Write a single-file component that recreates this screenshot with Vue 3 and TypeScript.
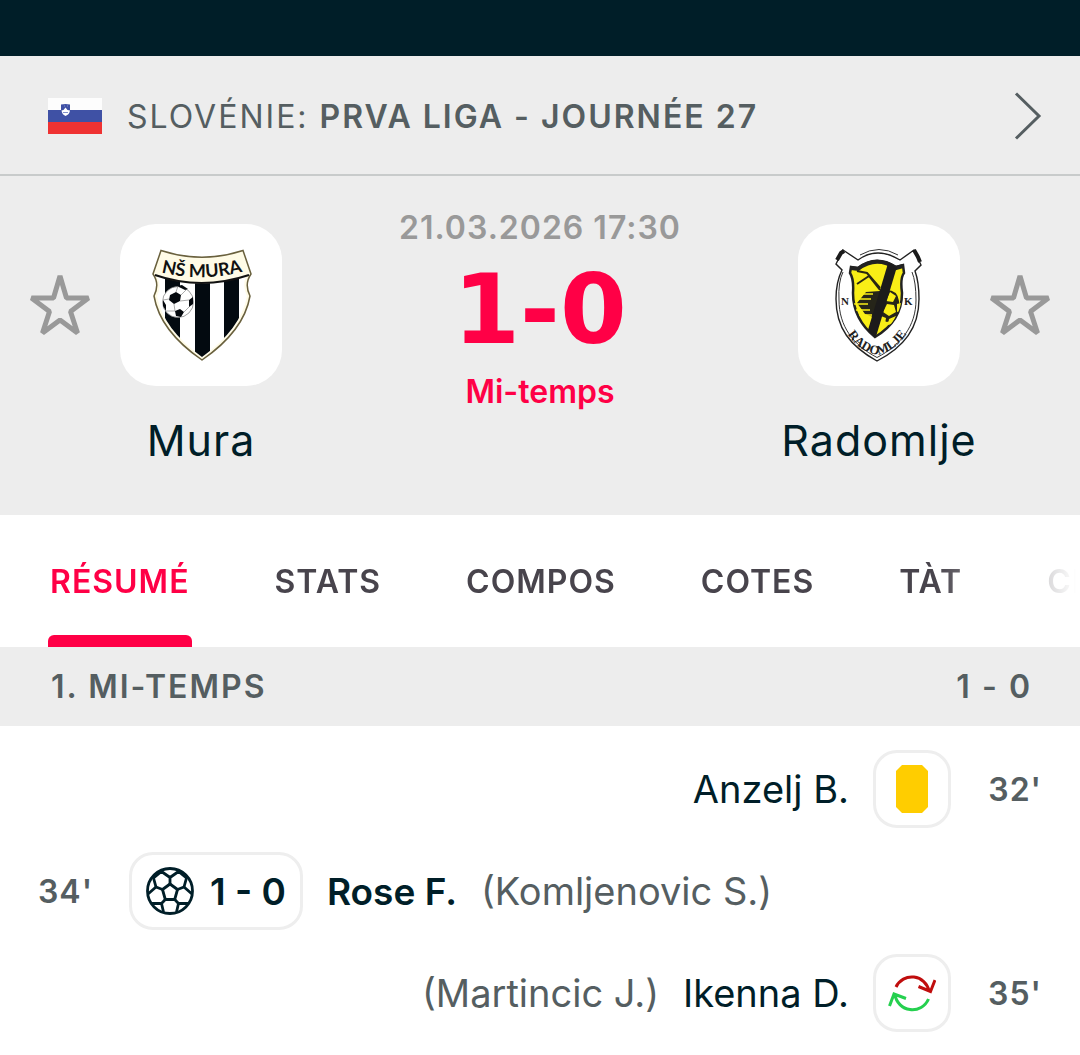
<script setup lang="ts">
import { ref } from 'vue'

interface MatchEvent {
  minute: string
  side: 'home' | 'away'
  kind: 'card' | 'goal' | 'sub'
  player: string
  other?: string
  score?: string
}

const tabs: string[] = ['RÉSUMÉ', 'STATS', 'COMPOS', 'COTES', 'TÀT', 'CLASSEMENT']
const active = ref('RÉSUMÉ')

const events: MatchEvent[] = [
  { minute: "32'", side: 'away', kind: 'card', player: 'Anzelj B.' },
  { minute: "34'", side: 'home', kind: 'goal', player: 'Rose F.', other: '(Komljenovic S.)', score: '1 - 0' },
  { minute: "35'", side: 'away', kind: 'sub', player: 'Ikenna D.', other: '(Martincic J.)' },
]
</script>

<template>
  <div class="page">
    <div class="topbar"></div>

    <a class="league" href="#">
      <svg class="flag" viewBox="0 0 54 36" aria-hidden="true">
        <rect width="54" height="12" fill="#fdfdfd" />
        <rect y="12" width="54" height="12" fill="#3f51a5" />
        <rect y="24" width="54" height="12" fill="#ef3232" />
        <path d="M13 6.500q4.500-1 9 0v6q0 4-4.500 5.500q-4.500-1.500-4.500-5.500z" fill="#3f51a5" />
        <path d="M13.500 12.500l2 -.5l2-2.500l2 2.500l2.500 .5q-.5 4-4.500 5.500q-3.500-1.500-4-5.500z" fill="#fff" />
        <path d="M15 14.500h5M16 8h1M19 8h1" stroke="#8190cb" stroke-width="1" />
      </svg>
      <span class="league-name">SLOVÉNIE: <strong>PRVA LIGA - JOURNÉE 27</strong></span>
      <svg class="chevron" viewBox="0 0 28 48" aria-hidden="true">
        <path d="M2 1.500L25 24L2 46.500" fill="none" stroke="#555e61" stroke-width="3" />
      </svg>
    </a>

    <header class="match">
      <button class="star" type="button" aria-label="Suivre Mura">
        <svg viewBox="0 0 60 60" aria-hidden="true">
          <path d="M30 1L36.500 23H58.500L40.500 36.500L47.500 58L30 45L12.500 58L19.500 36.500L1.500 23H23.500Z" />
        </svg>
      </button>

      <div class="team">
        <div class="crest">
          <svg viewBox="0 0 162 162" role="img" aria-label="NŠ Mura">
            <defs>
              <path id="mura-arc" d="M36 47Q81 60 128 46" />
              <clipPath id="mura-clip">
                <path d="M37 52Q81 67 126 52Q122 62 127 72Q121 105 82 133Q43 105 37 72Q42 62 37 52Z" />
              </clipPath>
            </defs>
            <path d="M41 26.500Q82 40 123 26.500L131 50Q124 60 130 72Q124 107 82 136Q40 107 34 72Q40 60 33 50Z" fill="#fffbe6" stroke="#69603d" stroke-width="1.500" />
            <g clip-path="url(#mura-clip)">
              <rect x="30" y="45" width="110" height="95" fill="#fff" />
              <rect x="45" y="45" width="15" height="95" fill="#030a10" />
              <rect x="75" y="45" width="15" height="95" fill="#030a10" />
              <rect x="104" y="45" width="15" height="95" fill="#030a10" />
            </g>
            <path d="M35 51Q81 67 129 51" fill="none" stroke="#111" stroke-width="2" />
            <circle cx="58" cy="78" r="15.500" fill="#fff" stroke="#777" stroke-width=".7" />
            <path d="M50 71l6-3l5 3l-1 6l-6 3l-5-4zM57 62l5-1l6 4l-3 1zM69 76l4-3v7l-4 3zM55 87l5-2l4 3l-3 5l-5-1zM43 76l3 5v6l-3-5z" fill="#05090e" />
            <path d="M54 80l1 7M60 77l9-1M49 75l-6 1M56 68l2-6M61 71l5-5M64 88l5-5M46 87l9 0" stroke="#888" stroke-width=".7" fill="none" />
            <text class="mura-text"><textPath href="#mura-arc" startOffset="50%" text-anchor="middle">NŠ MURA</textPath></text>
          </svg>
        </div>
        <span class="team-name">Mura</span>
      </div>

      <div class="center">
        <time class="date" datetime="2026-03-21T17:30">21.03.2026 17:30</time>
        <span class="score">1-0</span>
        <span class="status">Mi-temps</span>
      </div>

      <div class="team">
        <div class="crest">
          <svg viewBox="0 0 162 162" role="img" aria-label="NK Radomlje">
            <defs>
              <path id="rad-arc" d="M42 91C47 112 60 127 79 131C98 127 111 112 117 91" />
              <clipPath id="rad-clip">
                <path d="M53 43l7 1q18-14 38-1l7-2l1 8q-4 5-2 20q0 28-27 44q-22-18-22-44q1-14-3-20z" />
              </clipPath>
            </defs>
            <path d="M45 26l15 10q19-14 42 0l14-10l7 15l-6 6Q121 58 121 75C121 104 106 123 79 137C52 122 38 104 38 75Q38 58 44 46L38 40Z" fill="#fff" stroke="#222" stroke-width="1.400" />
            <path d="M62 31q19-11 38 0M45 48Q40 58 41 76C41 102 55 121 79 133.500C103 121 118 102 118 76Q118 58 114 48" fill="none" stroke="#333" stroke-width="1" />
            <path d="M39 36l4-7l3-2M116 26l4 7l2 5" stroke="#1b1b1b" stroke-width="4" fill="none" />
            <path d="M53 43l7 1q18-14 38-1l7-2l1 8q-4 5-2 20q0 28-27 44q-22-18-22-44q1-14-3-20z" fill="#f9ee16" stroke="#222" stroke-width="2.500" />
            <path d="M53 44l7 1q18-14 38-1l7-2" fill="none" stroke="#222" stroke-width="4" />
            <g clip-path="url(#rad-clip)">
              <path d="M59 47l10 2l13 15M59 60l12-8l11 14" stroke="#292713" stroke-width="2" fill="none" />
              <path d="M82 67q17-4 19 10q1 18-12 21l-22-8l-8-11l9-11z" fill="#262519" />
              <path d="M58 70h17M57 75h16M56 80h14M58 86h14M61 91h13" stroke="#f9ee16" stroke-width="1.500" />
              <path d="M92 68l6 4l-3 6l-7-1zM89 80l7 1l2 7l-7 4l-6-4zM99 80l4-1v8l-4 1zM83 92l5 2l-1 6l-7-3zM91 95l7-3l-4 8l-4 1z" fill="#f9ee16" />
              <path d="M91 36h10L77 116H67z" fill="#1c1b1b" />
            </g>
            <text class="rad-letter" x="43" y="81">N</text>
            <text class="rad-letter" x="106" y="81">K</text>
            <text class="rad-text"><textPath href="#rad-arc" startOffset="50%" text-anchor="middle">RADOMLJE</textPath></text>
          </svg>
        </div>
        <span class="team-name">Radomlje</span>
      </div>

      <button class="star" type="button" aria-label="Suivre Radomlje">
        <svg viewBox="0 0 60 60" aria-hidden="true">
          <path d="M30 1L36.500 23H58.500L40.500 36.500L47.500 58L30 45L12.500 58L19.500 36.500L1.500 23H23.500Z" />
        </svg>
      </button>
    </header>

    <nav class="tabs">
      <button
        v-for="tab in tabs"
        :key="tab"
        type="button"
        class="tab"
        :class="{ active: tab === active }"
        @click="active = tab"
      >{{ tab }}</button>
    </nav>

    <h2 class="period"><span>1. MI-TEMPS</span><span>1 - 0</span></h2>

    <ul class="events">
      <li v-for="event in events" :key="event.minute" class="event" :class="event.side">
        <span class="minute">{{ event.minute }}</span>
        <span class="badge" :class="event.kind">
          <svg v-if="event.kind === 'card'" viewBox="0 0 48 48" aria-hidden="true">
            <path d="M14 0H34L40 6V42L34 48H14L8 42V6Z" fill="#ffcd00" />
          </svg>
          <svg v-else-if="event.kind === 'goal'" viewBox="0 0 48 48" aria-hidden="true">
            <g fill="none" stroke="#001e28" stroke-width="2.800" stroke-linejoin="round">
              <circle cx="24" cy="24" r="22.500" />
              <path d="M24 17L31.500 22.500L28.700 32.500H19.300L16.500 22.500Z" />
              <path d="M24 17V10.500M15.500 4.500L24 10.500L32.500 4.500M15.500 4.500L7.500 11L10 20M32.500 4.500L40.500 11L38 20" />
              <path d="M16.500 22.500L10 20L2 27M31.500 22.500L38 20L46 27" />
              <path d="M19.300 32.500L15.500 36.500L17.500 45M28.700 32.500L32.500 36.500L30.500 45M15.500 36.500H6M32.500 36.500H42" />
            </g>
          </svg>
          <svg v-else viewBox="0 0 48 48" aria-hidden="true">
            <g fill="none" stroke-width="3">
              <path d="M8 18A17.500 17.500 0 0 1 41 22M30.500 17.500L42.500 22.500L47 11" stroke="#c00d0d" />
              <path d="M40.500 30A17.500 17.500 0 0 1 7 25.500M1.500 37L6 25L18 29.500" stroke="#25d04f" />
            </g>
          </svg>
          <b v-if="event.score">{{ event.score }}</b>
        </span>
        <span class="player">{{ event.player }}</span>
        <span v-if="event.other" class="other">{{ event.other }}</span>
      </li>
    </ul>
  </div>
</template>

<style>
body {
  margin: 0;
  background: #fff;
}
</style>

<style scoped>
.page {
  font-family: Inter, "Liberation Sans", sans-serif;
  font-size: 32px;
  color: #001e28;
  overflow: hidden;
}

.topbar {
  height: 56px;
  background: #001e28;
}

.league {
  display: flex;
  align-items: center;
  height: 116px;
  padding: 2px 38px 0 48px;
  border-bottom: 2px solid #c8cbcb;
  background: #ededed;
  color: #555e61;
  text-decoration: none;
}

.flag {
  width: 54px;
  height: 36px;
  margin-right: 25px;
}

.league-name {
  flex: 1;
  letter-spacing: 2px;
  white-space: nowrap;
}

.league-name strong {
  font-weight: 600;
}

.chevron {
  width: 28px;
  height: 48px;
}

.match {
  display: flex;
  align-items: flex-start;
  padding: 28px 30px 47px;
  background: #ededed;
}

.star {
  width: 60px;
  height: 162px;
  margin-top: 20px;
  padding: 0;
  border: 0;
  background: none;
}

.star svg {
  display: block;
  width: 60px;
  height: 60px;
  margin: auto;
  fill: none;
  stroke: #999;
  stroke-width: 5;
  stroke-linejoin: bevel;
  overflow: visible;
}

.team {
  display: flex;
  flex-direction: column;
  align-items: center;
  width: 162px;
  margin: 20px 30px 0;
}

.crest {
  width: 162px;
  height: 162px;
  border-radius: 36px;
  background: #fff;
}

.crest svg {
  display: block;
}

.mura-text {
  font: 700 18px Lato, sans-serif;
  fill: #111;
}

.rad-letter {
  font: 700 11px "Liberation Serif", serif;
  fill: #222;
}

.rad-text {
  font: 700 13px "Liberation Serif", serif;
  fill: #222;
}

.team-name {
  margin-top: 26px;
  font-size: 43px;
  line-height: 56px;
  letter-spacing: 1px;
}

.center {
  flex: 1;
  display: flex;
  flex-direction: column;
  align-items: center;
  font-weight: 600;
  line-height: 48px;
  white-space: nowrap;
  color: #ff0046;
}

.date {
  color: #999;
  letter-spacing: 1px;
}

.score {
  font-family: "DejaVu Sans", sans-serif;
  font-size: 96px;
  font-weight: 700;
  line-height: 116px;
}

.tabs {
  display: flex;
  gap: 81px;
  height: 132px;
  padding-left: 48px;
  overflow: hidden;
  background: #fff;
  mask-image: linear-gradient(to right, #000 calc(100% - 144px), transparent calc(100% - 4px));
}

.tab {
  flex: none;
  position: relative;
  padding: 0 2px;
  border: 0;
  background: none;
  font: inherit;
  font-weight: 600;
  letter-spacing: 1px;
  color: #48444c;
}

.tab.active {
  color: #ff0046;
}

.tab.active::after {
  content: "";
  position: absolute;
  left: 0;
  right: 0;
  bottom: 0;
  height: 12px;
  border-radius: 6px 6px 0 0;
  background: #ff0046;
}

.period {
  display: flex;
  justify-content: space-between;
  margin: 0;
  padding: 0 48px 0 51px;
  background: #ededed;
  color: #555e61;
  font-size: 32px;
  font-weight: 600;
  line-height: 79px;
  letter-spacing: 2px;
}

.events {
  margin: 0;
  padding: 12px 0 0;
  list-style: none;
}

.event {
  display: flex;
  align-items: center;
  height: 102px;
  padding: 0 38px;
  font-size: 38px;
  white-space: nowrap;
}

.event.away {
  flex-direction: row-reverse;
}

.minute {
  width: 91px;
  font-size: 32px;
  font-weight: 600;
  letter-spacing: 1px;
  color: #555e61;
}

.away .minute {
  text-align: right;
}

.badge {
  display: flex;
  align-items: center;
  box-sizing: border-box;
  gap: 16px;
  height: 78px;
  padding: 0 12px;
  border: 3px solid #eee;
  border-radius: 24px;
}

.badge.goal {
  padding: 0 14px;
}

.badge svg {
  width: 48px;
  height: 48px;
}

.badge b,
.home .player {
  font-size: 37px;
  font-weight: 600;
}

.player {
  margin: 0 24px;
}

.other {
  color: #555e61;
}
</style>
